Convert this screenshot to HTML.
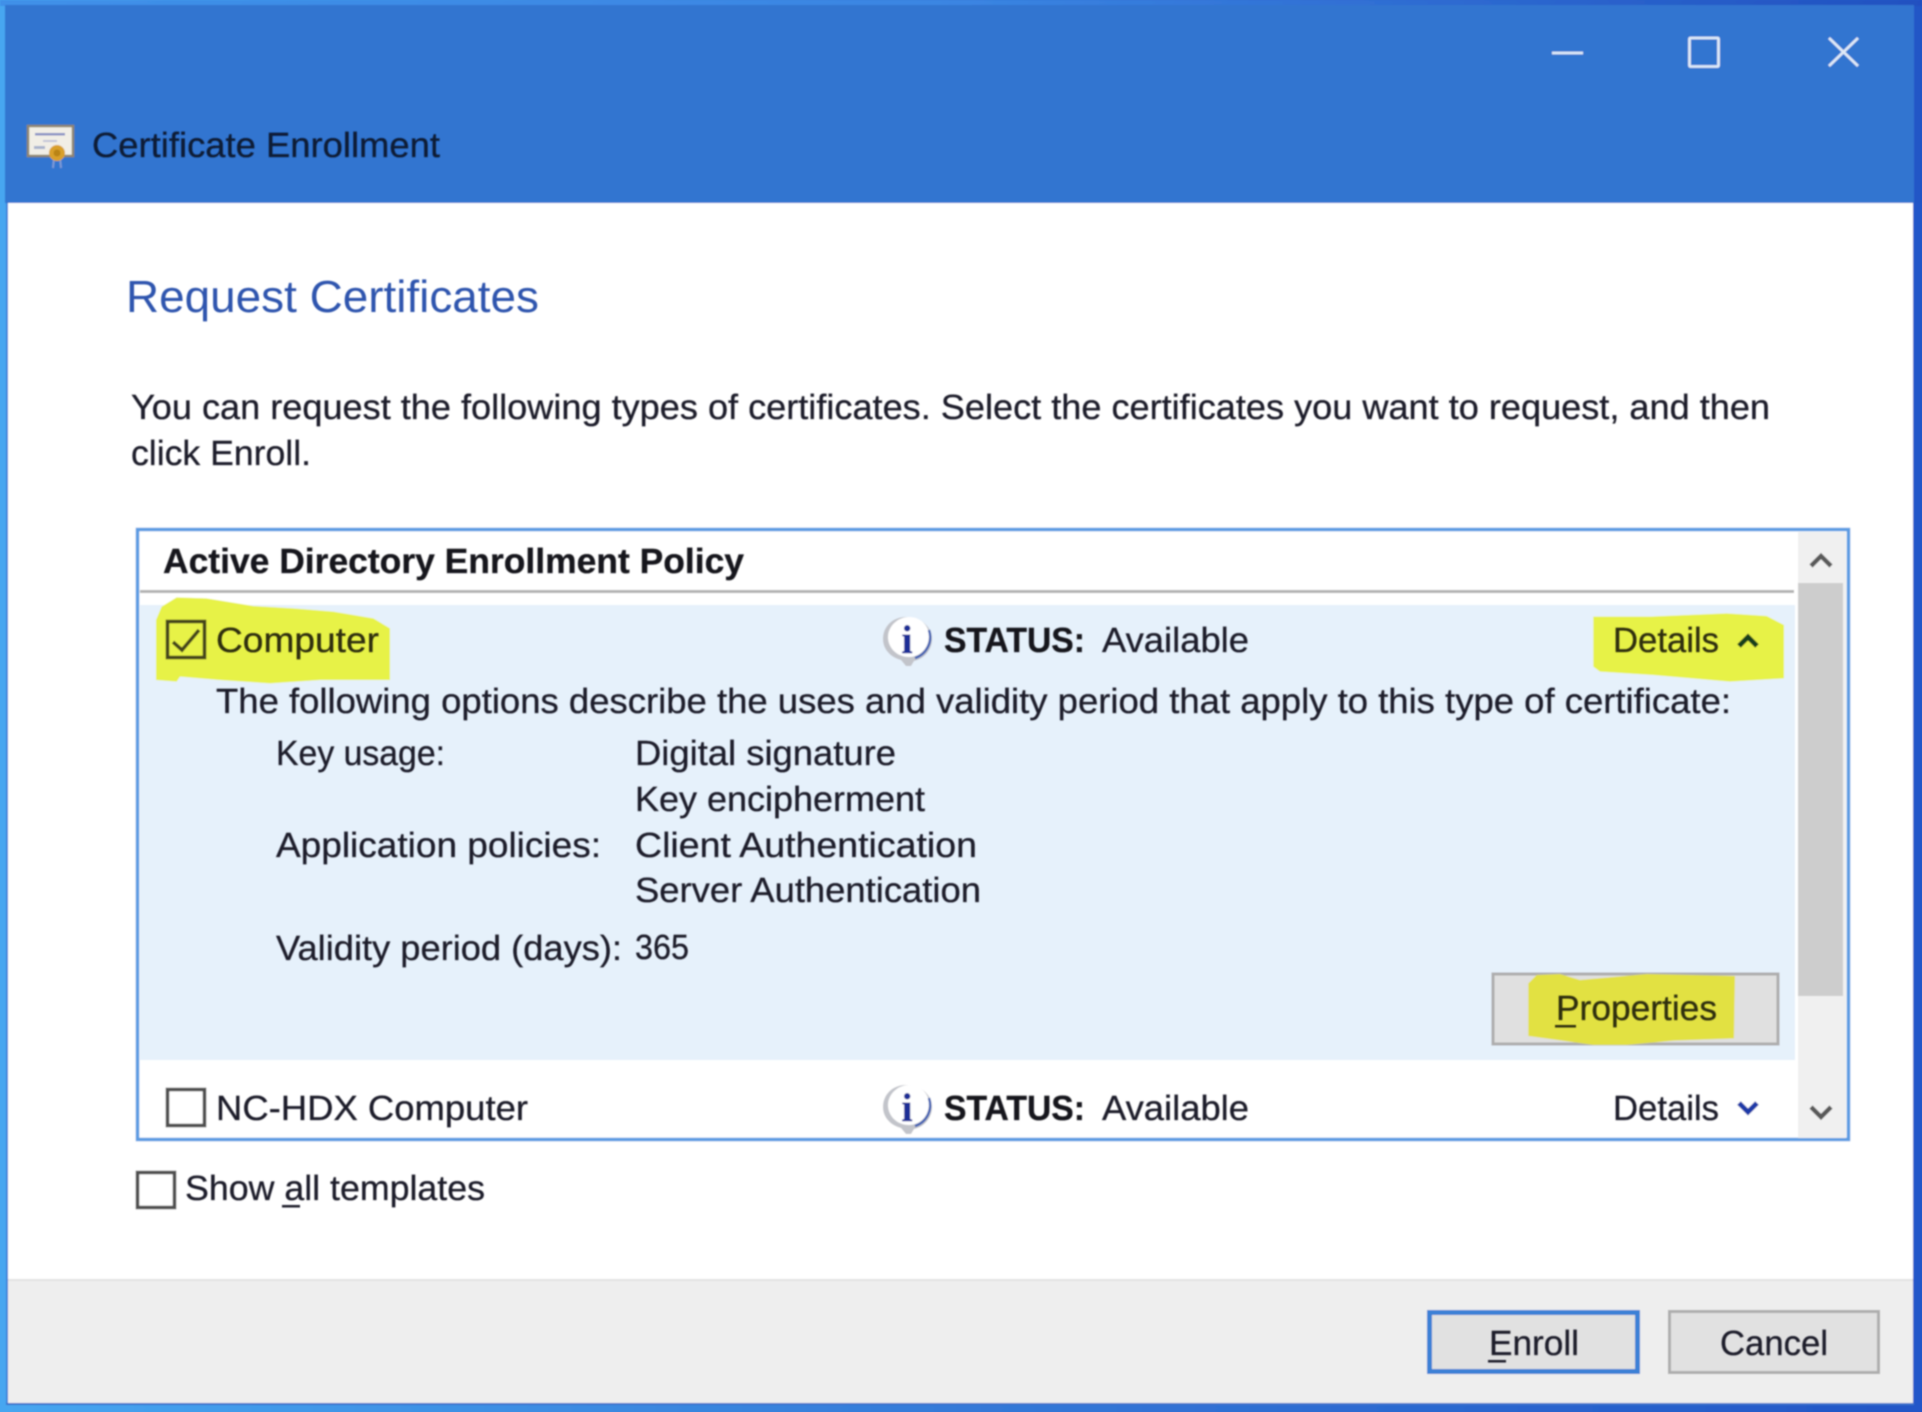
<!DOCTYPE html>
<html lang="en">
<head>
<meta charset="utf-8">
<title>Certificate Enrollment</title>
<style>
html,body{margin:0;padding:0;width:1922px;height:1412px;overflow:hidden;background:#fff}
svg{display:block;position:absolute;left:0;top:0}
text{font-family:"Liberation Sans",sans-serif;font-size:35px;fill:#1f1f2a;stroke:#1f1f2a;stroke-width:.3;text-rendering:geometricPrecision}
.b{font-weight:700;fill:#16161f;stroke:#16161f}
.y{fill:#2e2e0c;stroke:#2e2e0c}
.i{font-family:"Liberation Serif",serif;font-size:40px;font-weight:700;fill:#1c2f96;stroke:#1c2f96;stroke-width:.4}
</style>
</head>
<body>
<svg width="1922" height="1412" viewBox="0 0 1922 1412" xmlns="http://www.w3.org/2000/svg">
<defs>
<linearGradient id="edge" x1="0" x2="1" y1="0" y2="0">
<stop offset="0" stop-color="#46a6f0"/><stop offset=".5" stop-color="#3479d8"/><stop offset="1" stop-color="#2255c6"/>
</linearGradient>
<linearGradient id="top" x1="0" x2="1" y1="0" y2="0">
<stop offset="0" stop-color="#3f90e8"/><stop offset=".5" stop-color="#3a85e2"/><stop offset="1" stop-color="#2150c0"/>
</linearGradient>
<filter id="soft" x="-2%" y="-2%" width="104%" height="104%"><feGaussianBlur stdDeviation="0.85"/></filter>
<filter id="soft2" x="-2%" y="-2%" width="104%" height="104%"><feGaussianBlur stdDeviation="0.7"/></filter>
</defs>

<g filter="url(#soft2)">
<!-- frame -->
<rect x="-4" y="-4" width="1930" height="1420" fill="url(#edge)"/>
<rect x="0" y="0" width="1922" height="6" fill="url(#top)"/>
<rect x="5" y="5" width="1909" height="198" fill="#3375d0"/>
<rect x="6" y="203" width="2" height="1202" fill="#3c82d8"/>
<rect x="8" y="203" width="1905" height="1200" fill="#fff"/>
<rect x="1913" y="203" width="9" height="1209" fill="#2357c9"/>
<rect x="6" y="1403" width="1908" height="2" fill="#3a72cc"/>
<!-- footer -->
<rect x="8" y="1280" width="1905" height="123" fill="#eeeeee"/>
<rect x="8" y="1279" width="1905" height="2" fill="#e2e2e2"/>

<!-- window controls -->
<g stroke="#dfe9f7" fill="none" stroke-width="2.8">
<path d="M1552 53H1583"/>
<rect x="1689.5" y="38" width="29" height="28.5" rx="1"/>
<path d="M1829 38L1858 66M1858 38L1829 66"/>
</g>

<!-- certificate icon -->
<rect x="28" y="126" width="45" height="30" fill="#f1eee6" stroke="#8f8570" stroke-width="2.5"/>
<rect x="35" y="133" width="30" height="2.5" fill="#8a93c4"/>
<rect x="43" y="140" width="14" height="2" fill="#c2c5d8"/>
<rect x="34" y="146" width="11" height="3" fill="#a8b2cc"/>
<path d="M54 158L53 168M60 158L61 168" stroke="#7d9ad6" stroke-width="2"/>
<circle cx="57" cy="153" r="8" fill="#d9a02a"/>
<circle cx="57" cy="153" r="3.5" fill="#b98418"/>

<!-- list box -->
<rect x="137.5" y="529.5" width="1711" height="610" fill="#fff" stroke="#5b9be2" stroke-width="3.5"/>
<rect x="1798" y="532" width="48" height="606" fill="#f0f0f0"/>
<rect x="1798" y="583" width="45" height="413" fill="#cdcdcd"/>
<path d="M1811 566L1821 556L1831 566" fill="none" stroke="#5a5a5a" stroke-width="4.5"/>
<path d="M1811 1107L1821 1117L1831 1107" fill="none" stroke="#5a5a5a" stroke-width="4.5"/>
<rect x="140" y="590" width="1654" height="3" fill="#b2b2b2"/>
<rect x="140" y="605" width="1655" height="455" fill="#e6f1fb"/>

<!-- Properties button -->
<rect x="1493" y="974" width="285" height="70" fill="#e0e0e0" stroke="#adadad" stroke-width="3"/>

<!-- highlights -->
<polygon transform="translate(120 520) scale(.3333)" fill="#e7f247" points="108,480 108,300 125,260 170,232 260,235 400,258 520,265 640,275 760,295 810,325 810,480 600,480 450,490 300,480 180,470 170,485"/>
<polygon transform="translate(1460 520) scale(.3333)" fill="#e7f247" points="400,290 570,290 800,280 920,288 972,315 972,475 810,485 580,465 420,455 400,440"/>
<polygon transform="translate(1460 950) scale(.3333)" fill="#e2e142" points="205,100 230,75 300,72 360,90 560,72 825,78 822,265 640,272 500,285 400,285 280,268 205,258"/>

<!-- checkboxes -->
<rect x="167.5" y="621.5" width="37" height="36" fill="none" stroke="#45451a" stroke-width="3.6"/>
<path d="M173 642L182 650L199 630" fill="none" stroke="#45451a" stroke-width="3.6"/>
<rect x="167.5" y="1089.5" width="37" height="36" fill="#fff" stroke="#505050" stroke-width="3.6"/>
<rect x="137.5" y="1172.5" width="37" height="35" fill="#fff" stroke="#505050" stroke-width="3.6"/>

<!-- info icon 1 -->
<path d="M906 617c14 0 26 9 26 22c0 11-8 20-18 22l-3 5h-5l-5-6c-11-3-18-11-18-21c0-13 10-22 23-22z" fill="#c2c4ca"/>
<path d="M909 617c11 0 20 8 20 19s-8 21-20 21s-21-9-21-20s10-20 21-20z" fill="#fff"/>
<path d="M929 630a22 22 0 0 1-14 28" fill="none" stroke="#4866b4" stroke-width="2.6"/>
<text class="i" x="907" y="653" text-anchor="middle">i</text>
<!-- info icon 2 -->
<path d="M906 1085c14 0 26 9 26 22c0 11-8 20-18 22l-3 5h-5l-5-6c-11-3-18-11-18-21c0-13 10-22 23-22z" fill="#c2c4ca"/>
<path d="M909 1085c11 0 20 8 20 19s-8 21-20 21s-21-9-21-20s10-20 21-20z" fill="#fff"/>
<path d="M929 1098a22 22 0 0 1-14 28" fill="none" stroke="#4866b4" stroke-width="2.6"/>
<text class="i" x="907" y="1121" text-anchor="middle">i</text>

<!-- chevrons -->
<path d="M1739 646L1748 637L1757 646" fill="none" stroke="#173f1a" stroke-width="5"/>
<path d="M1739 1103L1748 1112L1757 1103" fill="none" stroke="#1a3aa8" stroke-width="5"/>

<!-- bottom buttons -->
<rect x="1429.5" y="1312.5" width="208" height="59" fill="#e1e1e1" stroke="#3a80d6" stroke-width="5"/>
<rect x="1669.5" y="1311.5" width="209" height="61" fill="#e1e1e1" stroke="#adadad" stroke-width="3"/>
</g>

<g filter="url(#soft)">
<text x="92" y="157" textLength="348" lengthAdjust="spacingAndGlyphs" style="fill:#0a1a36;stroke:#0a1a36">Certificate Enrollment</text>
<text x="126" y="312" textLength="413" lengthAdjust="spacingAndGlyphs" style="font-size:45px;fill:#2f55ae;stroke:none">Request Certificates</text>
<text x="131" y="419" textLength="1639" lengthAdjust="spacingAndGlyphs">You can request the following types of certificates. Select the certificates you want to request, and then</text>
<text x="131" y="465" textLength="180" lengthAdjust="spacingAndGlyphs">click Enroll.</text>

<text class="b" x="163" y="573" textLength="581" lengthAdjust="spacingAndGlyphs">Active Directory Enrollment Policy</text>

<text class="y" x="216" y="652" textLength="163" lengthAdjust="spacingAndGlyphs">Computer</text>
<text class="b" x="944" y="652" textLength="141" lengthAdjust="spacingAndGlyphs">STATUS:</text>
<text x="1102" y="652" textLength="147" lengthAdjust="spacingAndGlyphs">Available</text>
<text class="y" x="1613" y="652" textLength="106" lengthAdjust="spacingAndGlyphs">Details</text>

<text x="216" y="713" textLength="1515" lengthAdjust="spacingAndGlyphs">The following options describe the uses and validity period that apply to this type of certificate:</text>

<text x="276" y="765" textLength="169" lengthAdjust="spacingAndGlyphs">Key usage:</text>
<text x="635" y="765" textLength="261" lengthAdjust="spacingAndGlyphs">Digital signature</text>
<text x="635" y="811" textLength="290" lengthAdjust="spacingAndGlyphs">Key encipherment</text>
<text x="276" y="857" textLength="325" lengthAdjust="spacingAndGlyphs">Application policies:</text>
<text x="635" y="857" textLength="342" lengthAdjust="spacingAndGlyphs">Client Authentication</text>
<text x="635" y="902" textLength="346" lengthAdjust="spacingAndGlyphs">Server Authentication</text>
<text x="276" y="960" textLength="346" lengthAdjust="spacingAndGlyphs">Validity period (days):</text>
<text x="635" y="959" textLength="54" lengthAdjust="spacingAndGlyphs">365</text>

<text class="y" x="1556" y="1020" textLength="161" lengthAdjust="spacingAndGlyphs">Properties</text>
<rect x="1555" y="1025" width="21" height="2.5" fill="#2e2e0c"/>

<text x="216" y="1120" textLength="312" lengthAdjust="spacingAndGlyphs">NC-HDX Computer</text>
<text class="b" x="944" y="1120" textLength="141" lengthAdjust="spacingAndGlyphs">STATUS:</text>
<text x="1102" y="1120" textLength="147" lengthAdjust="spacingAndGlyphs">Available</text>
<text x="1613" y="1120" textLength="106" lengthAdjust="spacingAndGlyphs">Details</text>

<text x="185" y="1200" textLength="300" lengthAdjust="spacingAndGlyphs">Show all templates</text>
<rect x="282" y="1205" width="18" height="2.5" fill="#1f1f2a"/>

<text x="1489" y="1355" textLength="90" lengthAdjust="spacingAndGlyphs">Enroll</text>
<rect x="1488" y="1360" width="18" height="2.5" fill="#1f1f2a"/>
<text x="1720" y="1355" textLength="108" lengthAdjust="spacingAndGlyphs">Cancel</text>
</g>
</svg>
</body>
</html>
